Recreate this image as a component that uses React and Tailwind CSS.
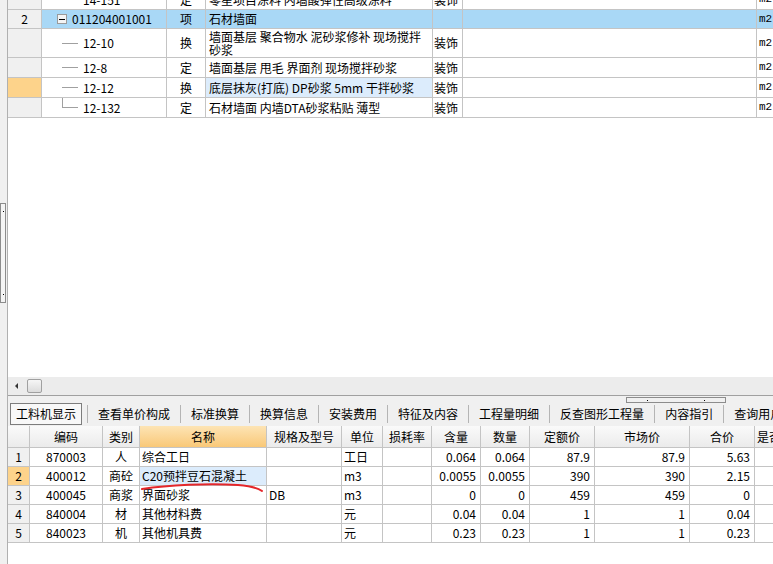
import React from "react";

const topRows = [
  { h: "h-[20px]", code: "14-151", type: "定", name: "零星项目涂料 内墙酸弹性高级涂料", spec: "装饰", unit: "m2", leaf: true },
  { h: "h-[19px]", num: "2", code: "011204001001", type: "项", name: "石材墙面", spec: "", unit: "m2", parent: true, selected: true },
  { h: "h-[29px]", code: "12-10", type: "换", name: "墙面基层 聚合物水 泥砂浆修补 现场搅拌", name2: "砂浆", spec: "装饰", unit: "m2", leaf: true },
  { h: "h-[20px]", code: "12-8", type: "定", name: "墙面基层 甩毛 界面剂 现场搅拌砂浆", spec: "装饰", unit: "m2", leaf: true },
  { h: "h-[20px]", code: "12-12", type: "换", name: "底层抹灰(打底) DP砂浆 5mm 干拌砂浆", spec: "装饰", unit: "m2", leaf: true, current: true },
  { h: "h-[20px]", code: "12-132", type: "定", name: "石材墙面 内墙DTA砂浆粘贴 薄型", spec: "装饰", unit: "m2", leaf: true, last: true },
];

const tabs = ["查看单价构成", "标准换算", "换算信息", "安装费用", "特征及内容", "工程量明细", "反查图形工程量", "内容指引", "查询用户清单"];

const items = [
  ["1", "870003", "人", "综合工日", "", "工日", "", "0.064", "0.064", "87.9", "87.9", "5.63"],
  ["2", "400012", "商砼", "C20预拌豆石混凝土", "", "m3", "", "0.0055", "0.0055", "390", "390", "2.15"],
  ["3", "400045", "商浆", "界面砂浆", "DB", "m3", "", "0", "0", "459", "459", "0"],
  ["4", "840004", "材", "其他材料费", "", "元", "", "0.04", "0.04", "1", "1", "0.04"],
  ["5", "840023", "机", "其他机具费", "", "元", "", "0.23", "0.23", "1", "1", "0.23"],
];

const cell = "shrink-0 flex items-center overflow-hidden whitespace-nowrap border-r border-b border-[#c4c4c4]";

function TopRow({ r }) {
  const rowBg = r.selected ? "bg-[#a9d8f6]" : "bg-white";
  return (
    <div className={`flex ${r.h} ${rowBg}`}>
      <div className={`${cell} w-[34px] justify-center ${r.current ? "bg-[#fdd38b]" : "bg-[#f0f0f0]"}`}>{r.num}</div>
      <div className={`${cell} w-[125px] relative`}>
        {r.parent ? (
          <>
            <span className="ml-[15px] w-[10px] h-[10px] shrink-0 border border-[#9a9a9a] bg-[#f4f4f4] flex items-center justify-center">
              <span className="w-[6px] h-[1px] bg-black" />
            </span>
            <span className="ml-[5px]">{r.code}</span>
          </>
        ) : (
          <>
            {r.last && <span className="absolute left-[20px] top-0 h-1/2 w-[1px] bg-[#a0a0a0]" />}
            <span className="ml-[20px] w-[16px] h-[1px] shrink-0 bg-[#a0a0a0]" />
            <span className="ml-[5px]">{r.code}</span>
          </>
        )}
      </div>
      <div className={`${cell} w-[39px] justify-center`}>{r.type}</div>
      <div className={`${cell} w-[227px] pl-[3px] ${r.current ? "bg-[#dcecfc]" : ""}`}>
        {r.name2 ? (
          <span className="leading-[13px]">
            {r.name}
            <br />
            {r.name2}
          </span>
        ) : (
          r.name
        )}
      </div>
      <div className={`${cell} w-[30px] pl-[1px]`}>{r.spec}</div>
      <div className={`${cell} w-[294px]`} />
      <div className="shrink-0 w-[16px] flex items-center whitespace-nowrap border-b border-[#c4c4c4] pl-[2px] text-[11px] font-['Liberation_Mono',monospace]">{r.unit}</div>
    </div>
  );
}

const bw = ["w-[22px]", "w-[73px]", "w-[37px]", "w-[127px]", "w-[75px]", "w-[41px]", "w-[49px]", "w-[49px]", "w-[49px]", "w-[65px]", "w-[95px]", "w-[65px]", "w-[40px]"];
const heads = ["", "编码", "类别", "名称", "规格及型号", "单位", "损耗率", "含量", "数量", "定额价", "市场价", "合价", "是否暂估"];

export default function App() {
  return (
    <div className="relative w-[773px] h-[564px] overflow-hidden bg-white flex text-[12px] text-black font-['Noto_Sans_CJK_SC','Liberation_Sans',sans-serif]">
      {/* 左侧分隔条 */}
      <div className="w-[8px] shrink-0 bg-[#f0f0f0] border-r border-[#b0b0b0] flex flex-col">
        <div className="h-[203px]" />
        <div className="w-[6px] h-[100px] border border-[#8c8c8c] bg-[#f4f4f4] flex flex-col justify-between items-center py-[7px]">
          <span className="w-[1px] h-[1px] bg-black" />
          <span className="w-[1px] h-[1px] bg-black" />
        </div>
      </div>

      <div className="flex-1 flex flex-col min-w-0">
        {/* 上方清单 */}
        <div className="mt-[-10px] flex flex-col">
          {topRows.map((r, i) => (
            <TopRow key={i} r={r} />
          ))}
        </div>
        <div className="h-[259px] shrink-0" />

        {/* 水平滚动条 */}
        <div className="h-[19px] shrink-0 bg-[#ececec] border-b border-[#a0a0a0] flex items-center">
          <span className="ml-[7px] w-0 h-0 shrink-0 border-y-[3px] border-y-transparent border-r-[3px] border-r-[#333]" />
          <span className="ml-[9px] w-[15px] h-[14px] shrink-0 border border-[#a0a0a0] rounded-[2px] bg-linear-to-b from-[#f6f6f6] to-[#dcdcdc]" />
        </div>

        {/* 标签页 */}
        <div className="relative h-[30px] shrink-0 bg-[#f0f0f0] pt-[7px] pl-[2px] flex items-start overflow-hidden">
          <div className="absolute left-[618px] top-[1px] w-[100px] h-[6px] border border-[#8c8c8c] flex justify-between items-center px-[20px]">
            <span className="w-[1px] h-[1px] bg-black" />
            <span className="w-[1px] h-[1px] bg-black" />
          </div>
          <div className="h-[22px] px-[5px] shrink-0 whitespace-nowrap border border-[#7d7d7d] bg-[#f8f8f8] flex items-center">工料机显示</div>
          <span className="ml-[5px] mt-[2px] w-[1px] h-[18px] shrink-0 bg-[#b4b4b4]" />
          {tabs.map((t, i) => (
            <React.Fragment key={i}>
              <div className="h-[22px] px-[10px] shrink-0 flex items-center whitespace-nowrap">{t}</div>
              <span className="mt-[2px] w-[1px] h-[18px] bg-[#b4b4b4] shrink-0" />
            </React.Fragment>
          ))}
        </div>

        {/* 工料机表 */}
        <div className="flex h-[22px] shrink-0">
          {heads.map((h, i) => (
            <div
              key={i}
              className={`${cell} ${bw[i]} ${i === 12 ? "pl-[2px] border-r-0" : "justify-center"} ${
                i === 3 ? "bg-linear-to-b from-[#fde4b4] to-[#f9c877]" : "bg-linear-to-b from-[#fafafa] to-[#ebebeb]"
              }`}
            >
              {h}
            </div>
          ))}
        </div>
        {items.map((row, ri) => (
          <div key={ri} className="flex h-[19px] shrink-0">
            {row.map((v, ci) => {
              let cls = "";
              if (ci === 0) cls = `justify-center ${ri === 1 ? "bg-[#fdd38b]" : "bg-[#f0f0f0]"}`;
              else if (ci === 1 || ci === 2) cls = "justify-center";
              else if (ci >= 7) cls = "justify-end pr-[4px]";
              else cls = "pl-[2px]";
              if (ci === 3 && ri === 1) cls += " bg-[#dcecfc]";
              return (
                <div key={ci} className={`${cell} ${bw[ci]} ${cls}`}>
                  {v}
                </div>
              );
            })}
            <div className={`${cell} ${bw[12]} border-r-0`} />
          </div>
        ))}
      </div>

      {/* 红色标注线 */}
      <svg className="absolute left-[138px] top-[481px]" width="130" height="14" viewBox="0 0 130 14">
        <path d="M4 8 C 30 4, 70 2, 100 4 C 112 5, 120 7, 124 10" fill="none" stroke="#e4262a" strokeWidth="2" strokeLinecap="round" />
      </svg>
    </div>
  );
}
